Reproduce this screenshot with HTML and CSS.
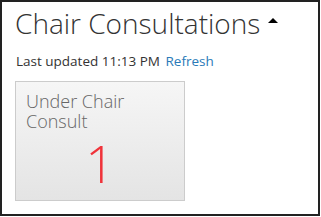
FILE: index.html
```html
<!DOCTYPE html>
<html lang="en">
<head>
  <meta charset="UTF-8">
  <meta name="viewport" content="width=device-width, initial-scale=1.0">
  <title>Chair Consultations</title>
  <link rel="stylesheet" href="styles.css">
</head>
<body>
  <div class="panel">
    <h2 class="panel-title">Chair Consultations <span class="caret"></span></h2>
    <p class="updated">Last updated 11:13 PM <a href="#" class="refresh">Refresh</a></p>
    <div class="tiles">
      <div class="tile">
        <div class="tile-label">Under Chair Consult</div>
        <div class="tile-count">1</div>
      </div>
    </div>
  </div>
</body>
</html>
```

FILE: styles.css
```css
html, body {
  margin: 0;
  padding: 0;
}
body {
  font-family: "Open Sans", "Liberation Sans", sans-serif;
  color: #333;
  background: #fff;
}
.panel {
  width: 303px;
  height: 212px;
  border: 2px solid #222;
  padding: 0 0 0 13px;
}
.panel-title {
  margin: 0;
  padding-top: 4px;
  font-size: 28px;
  font-weight: 300;
  line-height: 34px;
  color: #333;
  display: flex;
  align-items: center;
  gap: 8px;
}
/* caret next to the title */
.caret {
  width: 0;
  height: 0;
  border-left: 5px solid transparent;
  border-right: 5px solid transparent;
  border-bottom: 5px solid #000;
  margin-top: -6px;
}
.updated {
  margin: 12px 0 0 1px;
  font-size: 13.5px;
  line-height: 18px;
}
.refresh {
  color: #2a7ab8;
  text-decoration: none;
  margin-left: 2px;
}
.tiles {
  display: flex;
  margin-top: 11px;
}
.tile {
  width: 168px;
  height: 118px;
  border: 1px solid #ccc;
  background: linear-gradient(to bottom, #f6f6f6, #e4e4e4);
  display: flex;
  flex-direction: column;
}
.tile-label {
  padding: 9px 0 0 10px;
  font-size: 18px;
  font-weight: 300;
  line-height: 20px;
  color: #666;
}
.tile-count {
  text-align: center;
  font-size: 52px;
  font-weight: 300;
  line-height: 50px;
  color: #f0333a;
  margin-top: 7px;
}
```
